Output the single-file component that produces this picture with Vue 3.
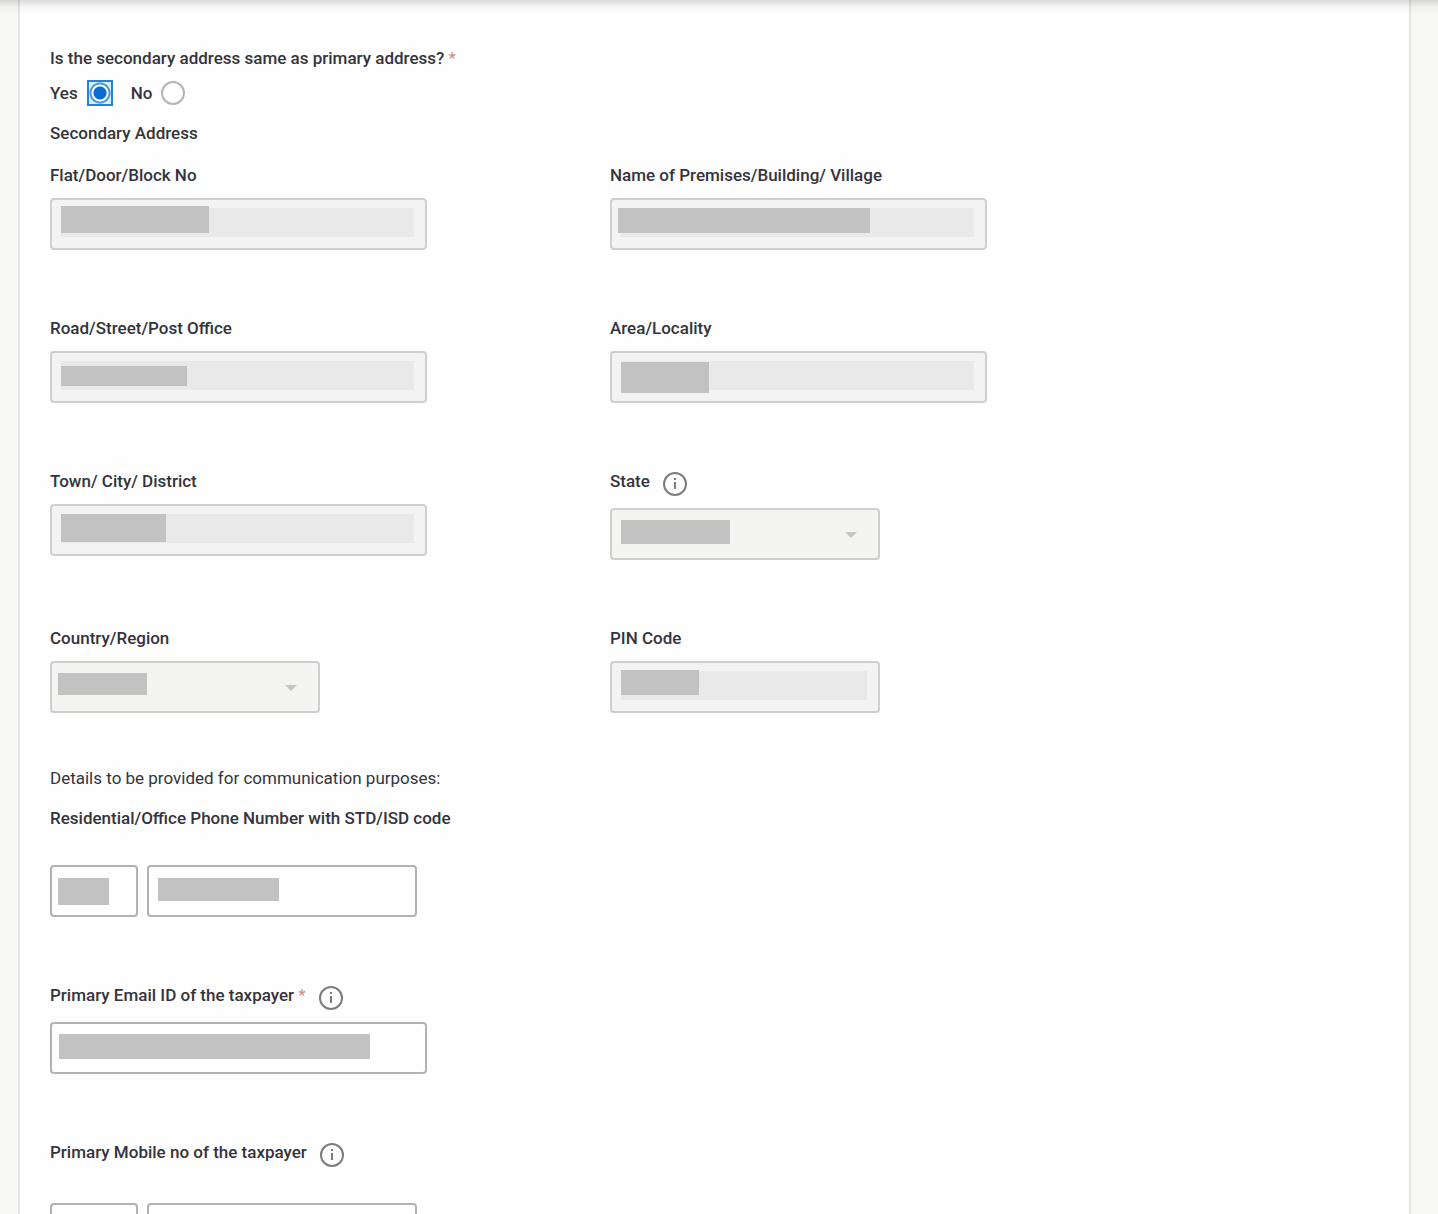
<script setup>
import { ref } from 'vue';

const sameAddress = ref('yes');

const addressFields = [
    { id: 'flat', label: 'Flat/Door/Block No', type: 'text', size: 'wide', mask: [11, 8, 148, 27] },
    { id: 'premises', label: 'Name of Premises/Building/ Village', type: 'text', size: 'wide', mask: [8, 10, 252, 25] },
    { id: 'road', label: 'Road/Street/Post Office', type: 'text', size: 'wide', mask: [11, 15, 126, 20] },
    { id: 'area', label: 'Area/Locality', type: 'text', size: 'wide', mask: [11, 11, 88, 31] },
    { id: 'town', label: 'Town/ City/ District', type: 'text', size: 'wide', mask: [11, 10, 105, 28] },
    { id: 'state', label: 'State', type: 'select', size: 'medium', info: true, mask: [11, 12, 109, 24] },
    { id: 'country', label: 'Country/Region', type: 'select', size: 'medium', mask: [8, 12, 89, 22] },
    { id: 'pin', label: 'PIN Code', type: 'text', size: 'medium', mask: [11, 9, 78, 25] },
];

// left, top, width and height of the bar that hides a private value
function maskStyle([left, top, width, height]) {
    return {
        left: left + 'px',
        top: top + 'px',
        width: width + 'px',
        height: height + 'px',
    };
}
</script>

<template>
    <div class="page">
        <form class="card" @submit.prevent>
            <fieldset class="question">
                <legend class="label">Is the secondary address same as primary address? <span class="required">*</span></legend>
                <div class="radios">
                    <label class="label radio">
                        Yes <input type="radio" name="same" value="yes" v-model="sameAddress">
                    </label>
                    <label class="label radio">
                        No <input type="radio" name="same" value="no" v-model="sameAddress">
                    </label>
                </div>
            </fieldset>

            <h2 class="label title">Secondary Address</h2>

            <div class="address">
                <div v-for="field in addressFields" :key="field.id" class="field">
                    <div class="label-row">
                        <label class="label" :for="field.id">{{ field.label }}</label>
                        <button v-if="field.info" type="button" class="info" aria-label="More information">
                            <svg viewBox="0 0 26 26" width="26" height="26">
                                <circle cx="13" cy="13" r="11" />
                                <path d="M13 11v7M13 7v2" />
                            </svg>
                        </button>
                    </div>
                    <div class="control" :class="field.size">
                        <select v-if="field.type === 'select'" :id="field.id" disabled></select>
                        <input v-else :id="field.id" type="text" disabled>
                        <svg v-if="field.type === 'select'" class="arrow" viewBox="0 0 14 8" width="14" height="8">
                            <path d="M1 1h12L7 7z" />
                        </svg>
                        <span class="mask" :style="maskStyle(field.mask)"></span>
                    </div>
                </div>
            </div>

            <p class="note">Details to be provided for communication purposes:</p>

            <div class="field phone">
                <label class="label" for="phone">Residential/Office Phone Number with STD/ISD code</label>
                <div class="phone-row">
                    <div class="control code">
                        <input id="phone-code" type="text" aria-label="STD/ISD code">
                        <span class="mask" :style="maskStyle([8, 13, 51, 27])"></span>
                    </div>
                    <div class="control medium">
                        <input id="phone" type="text">
                        <span class="mask" :style="maskStyle([11, 13, 121, 23])"></span>
                    </div>
                </div>
            </div>

            <div class="field contact">
                <div class="label-row">
                    <label class="label" for="email">Primary Email ID of the taxpayer <span class="required">*</span></label>
                    <button type="button" class="info" aria-label="More information">
                        <svg viewBox="0 0 26 26" width="26" height="26">
                            <circle cx="13" cy="13" r="11" />
                            <path d="M13 11v7M13 7v2" />
                        </svg>
                    </button>
                </div>
                <div class="control wide">
                    <input id="email" type="text">
                    <span class="mask" :style="maskStyle([9, 12, 311, 25])"></span>
                </div>
            </div>

            <div class="field phone contact">
                <div class="label-row">
                    <label class="label" for="mobile">Primary Mobile no of the taxpayer</label>
                    <button type="button" class="info" aria-label="More information">
                        <svg viewBox="0 0 26 26" width="26" height="26">
                            <circle cx="13" cy="13" r="11" />
                            <path d="M13 11v7M13 7v2" />
                        </svg>
                    </button>
                </div>
                <div class="phone-row">
                    <div class="control code">
                        <input id="mobile-code" type="text" aria-label="Country code">
                    </div>
                    <div class="control medium">
                        <input id="mobile" type="text">
                    </div>
                </div>
            </div>
        </form>
    </div>
</template>

<style>
body {
    margin: 0;
    background-color: #f8f8f7;
}
</style>

<style scoped>
.page {
    position: relative;
    box-sizing: border-box;
    height: 100vh;
    overflow: hidden;
    padding: 0 27px 0 18px;
    background-color: #f8f8f7;
    font-family: Roboto, "Liberation Sans", sans-serif;
    font-size: 17px;
    line-height: 24px;
    color: #34343c;
}

.page::before {
    content: "";
    position: absolute;
    top: 0;
    left: 0;
    right: 0;
    height: 14px;
    background: linear-gradient(rgba(0, 0, 0, 0.14), rgba(0, 0, 0, 0.03) 50%, transparent);
}

.card {
    box-sizing: border-box;
    min-height: 100vh;
    padding: 46px 15px 40px 30px;
    border: solid #e3e4e6;
    border-width: 0 2px;
    background-color: #fefefe;
}

.question {
    margin: 0;
    padding: 0;
    border: none;
}

legend {
    padding: 0;
}

.label {
    font-size: 17px;
    font-weight: 500;
    line-height: 24px;
}

.required {
    color: #d08a8c;
    font-weight: 400;
}

.radios {
    display: flex;
    gap: 18px;
    margin-top: 10px;
}

.radio {
    display: flex;
    align-items: center;
    gap: 9px;
    height: 26px;
}

.radio input {
    appearance: none;
    box-sizing: border-box;
    width: 24px;
    height: 24px;
    margin: 0;
    border: 2px solid #b4b4b4;
    border-radius: 50%;
    background-color: #fff;
}

.radio input:checked {
    width: 26px;
    height: 26px;
    border-color: #2a7fd0;
    border-radius: 0;
    background: radial-gradient(circle, #0b6bd3 6px, #fff 7px, #fff 8px, #4c95dc 9px, #4c95dc 10px, #d6f0fd 11px);
}

.title {
    margin: 15px 0 18px;
}

.address {
    display: grid;
    grid-template-columns: 5fr 7fr;
    row-gap: 66px;
}

.field {
    display: flex;
    flex-direction: column;
    gap: 11px;
}

.label-row {
    display: flex;
    align-items: flex-start;
    gap: 12px;
}

.info {
    height: 27px;
    margin: 1px 0 0;
    padding: 0;
    border: none;
    background: none;
    cursor: pointer;
}

.info svg {
    display: block;
    fill: none;
    stroke: #7c7c7c;
    stroke-width: 2;
}

.control {
    position: relative;
    max-width: 100%;
}

.wide {
    width: 377px;
}

.medium {
    width: 270px;
}

.code {
    width: 88px;
}

.control input,
.control select {
    display: block;
    appearance: none;
    box-sizing: border-box;
    width: 100%;
    height: 52px;
    margin: 0;
    padding: 8px 11px 11px 9px;
    border: 2px solid #b2b2b2;
    border-radius: 4px;
    background-color: #fefefe;
    font: inherit;
    color: inherit;
}

.control input:disabled {
    border-color: #cfcfcf;
    background: linear-gradient(#e9e9e9, #e9e9e9) content-box no-repeat, #f3f3f3;
}

.control select:disabled {
    border-color: #cfcfcf;
    background-color: #f4f4f3;
    opacity: 1;
}

.arrow {
    position: absolute;
    top: 23px;
    right: 22px;
    fill: #c6c6c6;
    pointer-events: none;
}

.mask {
    position: absolute;
    background-color: #c2c2c2;
    pointer-events: none;
}

.note {
    margin: 53px 0 16px;
    font-size: 17px;
}

.phone {
    gap: 35px;
}

.phone-row {
    display: flex;
    gap: 9px;
}

.contact {
    margin-top: 66px;
}
</style>
